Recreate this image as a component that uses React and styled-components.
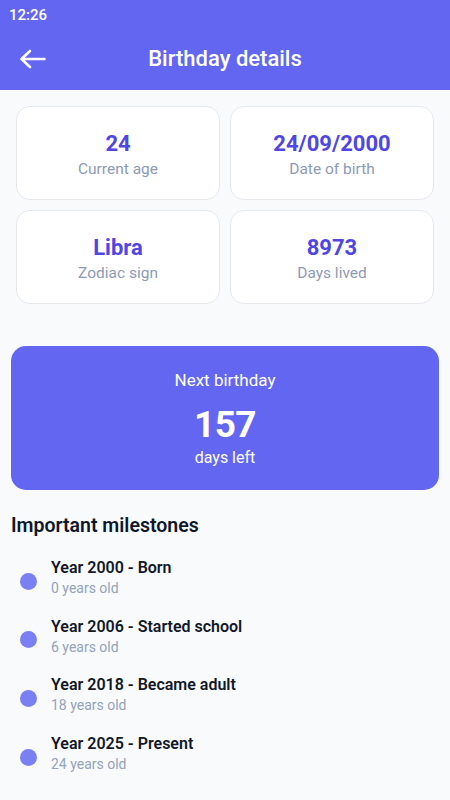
import React from "react";
import styled, { createGlobalStyle } from "styled-components";

const Global = createGlobalStyle`
  html, body { margin: 0; padding: 0; background: #f8fafc; }
  body { font-family: Roboto, "Noto Sans", "Liberation Sans", sans-serif; -webkit-font-smoothing: antialiased; }
  * { box-sizing: border-box; }
`;

const Screen = styled.div`
  width: 450px;
  min-height: 800px;
  background: #f8fafc;
  display: flex;
  flex-direction: column;
`;

const Header = styled.header`
  background: #6366f1;
  color: #fff;
  height: 90px;
  display: flex;
  flex-direction: column;
`;

const StatusBar = styled.div`
  height: 28px;
  padding: 6px 0 0 9px;
  font-size: 15px;
  font-weight: 500;
  line-height: 18px;
`;

const Toolbar = styled.div`
  flex: 1;
  display: grid;
  grid-template-columns: 56px 1fr 56px;
  align-items: center;
`;

const BackButton = styled.button`
  border: 0;
  background: transparent;
  color: #fff;
  padding: 0 0 0 19px;
  height: 40px;
  display: flex;
  align-items: center;
  cursor: pointer;
`;

const Title = styled.h1`
  margin: 0;
  text-align: center;
  font-size: 22px;
  font-weight: 500;
  line-height: 26px;
  margin-top: -1px;
`;

const Grid = styled.div`
  display: grid;
  grid-template-columns: 1fr 1fr;
  gap: 10px;
  padding: 16px 16px 0;
`;

const StatCard = styled.div`
  height: 94px;
  background: #fff;
  border: 1px solid #e6e8ee;
  border-radius: 14px;
  display: flex;
  flex-direction: column;
  align-items: center;
  justify-content: center;
  gap: 1px;
  padding-top: 2px;
`;

const StatValue = styled.div`
  font-size: 22px;
  font-weight: 700;
  color: #4f46e5;
  line-height: 28px;
`;

const StatLabel = styled.div`
  font-size: 15.5px;
  color: #8e9ab5;
  line-height: 20px;
`;

const Countdown = styled.section`
  margin: 42px 11px 0;
  height: 144px;
  background: #6366f1;
  border-radius: 15px;
  color: #fff;
  display: flex;
  flex-direction: column;
  align-items: center;
  justify-content: center;
  padding-top: 2px;
`;

const CountLabel = styled.div`
  font-size: 17px;
  line-height: 20px;
`;

const CountNumber = styled.div`
  font-size: 37px;
  font-weight: 700;
  line-height: 44px;
  margin-top: 13px;
  letter-spacing: -0.5px;
`;

const CountUnit = styled.div`
  font-size: 16px;
  line-height: 20px;
  margin-top: 1px;
`;

const Section = styled.section`
  padding: 24px 11px 0;
`;

const SectionTitle = styled.h2`
  margin: 0 0 20px;
  font-size: 19.5px;
  font-weight: 600;
  color: #0f172a;
  line-height: 24px;
`;

const List = styled.div`
  display: flex;
  flex-direction: column;
  gap: 18.7px;
`;

const Item = styled.div`
  display: flex;
  align-items: center;
  gap: 14px;
  padding-left: 9px;
`;

const Dot = styled.span`
  width: 17px;
  height: 17px;
  border-radius: 50%;
  background: #7a80f2;
  flex-shrink: 0;
  margin-top: 6px;
`;

const ItemText = styled.div`
  display: flex;
  flex-direction: column;
`;

const ItemTitle = styled.div`
  font-size: 16px;
  font-weight: 600;
  color: #111827;
  line-height: 20px;
`;

const ItemSub = styled.div`
  font-size: 14px;
  color: #94a3b8;
  line-height: 20px;
`;

const stats = [
  ["24", "Current age"],
  ["24/09/2000", "Date of birth"],
  ["Libra", "Zodiac sign"],
  ["8973", "Days lived"],
];

const milestones = [
  ["Year 2000 - Born", "0 years old"],
  ["Year 2006 - Started school", "6 years old"],
  ["Year 2018 - Became adult", "18 years old"],
  ["Year 2025 - Present", "24 years old"],
];

export default function App() {
  return (
    <Screen>
      <Global />
      <Header>
        <StatusBar>12:26</StatusBar>
        <Toolbar>
          <BackButton aria-label="Back">
            <svg width="27" height="20" viewBox="0 0 27 20" fill="none">
              <path d="M25.5 10H3M11 2L2.5 10L11 18" stroke="#fff" strokeWidth="2.6" strokeLinecap="round" strokeLinejoin="round" />
            </svg>
          </BackButton>
          <Title>Birthday details</Title>
          <span />
        </Toolbar>
      </Header>
      <Grid>
        {stats.map(([v, l]) => (
          <StatCard key={l}>
            <StatValue>{v}</StatValue>
            <StatLabel>{l}</StatLabel>
          </StatCard>
        ))}
      </Grid>
      <Countdown>
        <CountLabel>Next birthday</CountLabel>
        <CountNumber>157</CountNumber>
        <CountUnit>days left</CountUnit>
      </Countdown>
      <Section>
        <SectionTitle>Important milestones</SectionTitle>
        <List>
          {milestones.map(([t, s]) => (
            <Item key={t}>
              <Dot />
              <ItemText>
                <ItemTitle>{t}</ItemTitle>
                <ItemSub>{s}</ItemSub>
              </ItemText>
            </Item>
          ))}
        </List>
      </Section>
    </Screen>
  );
}
